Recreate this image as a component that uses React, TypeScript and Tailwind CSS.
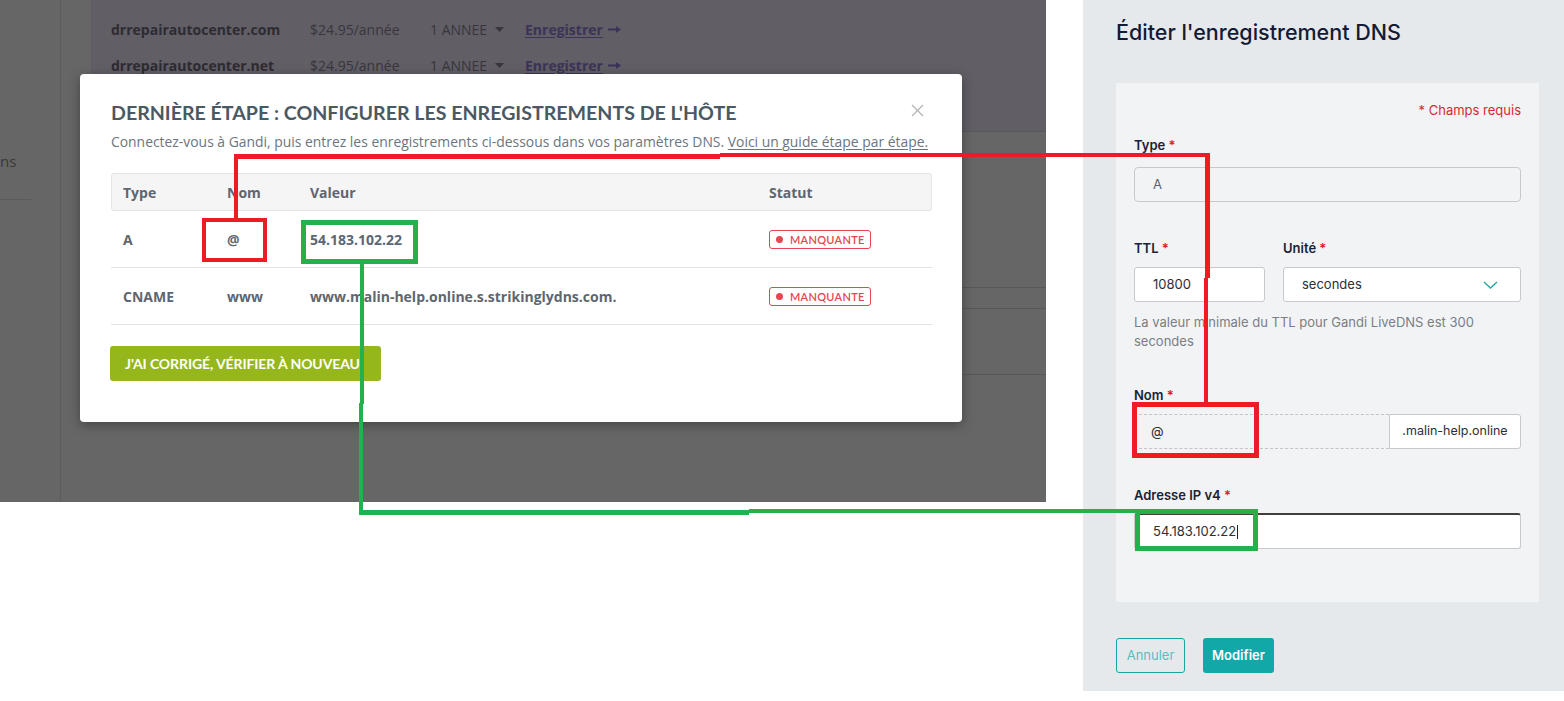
import React from 'react';

const RED = 'bg-[#ed1c24]';
const GREEN = 'bg-[#22b14c]';

const Badge: React.FC = () => (
  <span className="inline-flex items-center h-[19px] w-[102px] border border-[#e5464f] rounded-[3px] pl-[6px] gap-[7px] text-[#e5464f] text-[11px] leading-none font-['Lato'] font-semibold tracking-[0.3px] whitespace-nowrap">
    <span className="w-[7px] h-[7px] shrink-0 rounded-full bg-[#e5464f]" />
    MANQUANTE
  </span>
);

const Arrow: React.FC = () => (
  <svg width="13" height="7" viewBox="0 0 13 7" className="ml-[5px]">
    <rect x="0" y="2.5" width="9" height="2" fill="#3c3358" />
    <path d="M8 0 L13 3.5 L8 7 Z" fill="#3c3358" />
  </svg>
);

const DomainRow: React.FC<{ name: string }> = ({ name }) => (
  <div className="flex items-center h-[36px]">
    <span className="w-[199px] font-bold text-[#2d2b31]">{name}</span>
    <span className="w-[120px] text-[#38363c]">$24.95/année</span>
    <span className="flex items-center w-[95px] text-[#38363c]">
      1 ANNEE
      <svg width="9" height="5" viewBox="0 0 9 5" className="ml-[8px]"><path d="M0 0 L9 0 L4.5 5 Z" fill="#38363c" /></svg>
    </span>
    <span className="flex items-center font-bold text-[#3c3358]">
      <span className="underline underline-offset-2">Enregistrer</span>
      <Arrow />
    </span>
  </div>
);

const Label: React.FC<{ text: string; className?: string }> = ({ text, className }) => (
  <div className={`text-[13px] leading-[18px] font-semibold text-[#1b2233] ${className ?? ''}`}>
    {text} <span className="text-[#e0112b]">*</span>
  </div>
);

const App: React.FC = () => {
  return (
    <div className="relative w-[1564px] h-[701px] bg-white overflow-hidden flex items-start">
      {/* Strikingly screenshot with modal */}
      <div className="relative w-[1046px] h-[502px] shrink-0 bg-[#666666] flex font-['Open_Sans'] text-[14px]">
        <div className="w-[61px] shrink-0 border-r border-[#5b5b5b] flex flex-col">
          <div className="h-[151px]" />
          <div className="h-[48px] text-[15px] leading-[20px] text-[#3a3a3a]">ns</div>
          <div className="w-[31px] border-t border-[#5b5b5b]" />
        </div>
        <div className="w-[30px] shrink-0" />
        <div className="flex-1 flex flex-col">
          <div className="h-[131px] bg-[#615e66] pl-[20px] pt-[11px]">
            <DomainRow name="drrepairautocenter.com" />
            <DomainRow name="drrepairautocenter.net" />
          </div>
          <div className="h-[22px] border-t border-[#585858]" />
          <div className="h-[134px] border-t border-[#585858]" />
          <div className="h-[21px] border-t border-[#585858]" />
          <div className="h-[66px] border-t border-[#585858]" />
          <div className="border-t border-[#585858]" />
        </div>

        {/* modal */}
        <div className="absolute left-[80px] top-[74px] w-[882px] h-[348px] bg-white rounded-[4px] shadow-[0_3px_12px_rgba(0,0,0,0.35)] pl-[31px] pr-[30px] pt-[27px]">
          <svg width="13" height="13" viewBox="0 0 13 13" className="absolute left-[831px] top-[30px]">
            <path d="M1 1 L12 12 M12 1 L1 12" stroke="#b4b4b4" strokeWidth="1.3" />
          </svg>
          <h2 className="font-['Lato'] font-bold text-[19.6px] leading-[24px] text-[#4b5963] whitespace-nowrap">
            DERNIÈRE ÉTAPE : CONFIGURER LES ENREGISTREMENTS DE L'HÔTE
          </h2>
          <p className="mt-[7px] text-[13.9px] leading-[20px] text-[#6b7580] whitespace-nowrap">
            Connectez-vous à Gandi, puis entrez les enregistrements ci-dessous dans vos paramètres DNS.{' '}
            <span className="underline underline-offset-2">Voici un guide étape par étape.</span>
          </p>
          <div className="mt-[21px] w-[821px]">
            <div className="grid grid-cols-[104px_83px_459px_1fr] h-[38px] items-center bg-[#f5f5f5] border border-[#e4e4e4] rounded-[3px] font-bold text-[#5e6670]">
              <span className="pl-[11px]">Type</span>
              <span className="pl-[11px]">Nom</span>
              <span className="pl-[11px]">Valeur</span>
              <span className="pl-[11px]">Statut</span>
            </div>
            <div className="grid grid-cols-[104px_83px_459px_1fr] h-[57px] items-center border-b border-[#e4e4e4] font-bold text-[#5e6670]">
              <span className="pl-[12px]">A</span>
              <span className="pl-[12px]">@</span>
              <span className="pl-[12px]">54.183.102.22</span>
              <span className="pl-[12px] flex"><Badge /></span>
            </div>
            <div className="grid grid-cols-[104px_83px_459px_1fr] h-[57px] items-center border-b border-[#e4e4e4] font-bold text-[#5e6670]">
              <span className="pl-[12px]">CNAME</span>
              <span className="pl-[12px]">www</span>
              <span className="pl-[12px]">www.malin-help.online.s.strikinglydns.com.</span>
              <span className="pl-[12px] flex"><Badge /></span>
            </div>
          </div>
          <button className="mt-[21px] -ml-[1px] w-[271px] h-[35px] bg-[#96b71c] rounded-[3px] text-white font-['Lato'] font-bold text-[14px] tracking-[-0.1px] text-left pl-[15px]">
            J'AI CORRIGÉ, VÉRIFIER À NOUVEAU
          </button>
        </div>
      </div>

      {/* Gandi panel */}
      <div className="ml-[37px] w-[481px] h-[691px] shrink-0 bg-[#e6e9ec] pl-[33px] pt-[18px] font-['Inter']">
        <h2 className="text-[21.5px] leading-[28px] font-medium text-[#131a35]">Éditer l'enregistrement DNS</h2>
        <div className="mt-[37px] w-[423px] h-[519px] bg-[#f2f3f5] pl-[18px] pr-[18px] pt-[18px]">
          <div className="text-right text-[13px] leading-[18px] text-[#d42a36]">* Champs requis</div>
          <Label text="Type" className="mt-[17px]" />
          <div className="mt-[13px] h-[35px] border border-[#c6c9ce] rounded-[4px] flex items-center pl-[18px] text-[13px] text-[#5b6172]">A</div>

          <div className="mt-[37px] flex gap-[18px]">
            <div className="w-[131px]">
              <Label text="TTL" />
              <div className="mt-[10px] h-[35px] bg-white border border-[#c6c9ce] rounded-[3px] flex items-center pl-[18px] text-[13px] text-[#2b2f38]">10800</div>
            </div>
            <div className="flex-1">
              <Label text="Unité" />
              <div className="mt-[10px] h-[35px] bg-white border border-[#c6c9ce] rounded-[3px] flex items-center justify-between pl-[18px] pr-[22px] text-[13px] text-[#2b2f38]">
                secondes
                <svg width="15" height="8" viewBox="0 0 15 8"><path d="M1 1 L7.5 7 L14 1" fill="none" stroke="#1aa6a6" strokeWidth="1.3" /></svg>
              </div>
            </div>
          </div>
          <p className="mt-[11px] text-[13px] leading-[19px] text-[#7a7e86]">
            La valeur minimale du TTL pour Gandi LiveDNS est 300
            <br />
            secondes
          </p>

          <Label text="Nom" className="mt-[35px]" />
          <div className="mt-[10px] h-[35px] flex">
            <div className="flex-1 border-y border-dashed border-[#c4c4c4] flex items-center pl-[17px] text-[13px] text-[#2b2f38]">@</div>
            <div className="w-[132px] bg-white border border-[#c6c9ce] rounded-r-[3px] flex items-center justify-center text-[12.5px] text-[#2b2f38]">.malin-help.online</div>
          </div>

          <Label text="Adresse IP v4" className="mt-[37px]" />
          <div className="mt-[9px] h-[36px] bg-white border border-[#c6c9ce] border-t-2 border-t-[#3f3f3f] rounded-[3px] flex items-center pl-[18px] text-[13px] text-[#2b2f38]">
            54.183.102.22
            <span className="ml-[1px] w-px h-[14px] bg-[#222]" />
          </div>
        </div>
        <div className="mt-[36px] flex gap-[18px]">
          <button className="w-[69px] h-[35px] border border-[#1aa3a3] rounded-[3px] text-[13px] text-[#5cbcbc]">Annuler</button>
          <button className="w-[71px] h-[35px] bg-[#12a8a8] rounded-[3px] text-[13px] font-semibold text-white">Modifier</button>
        </div>
      </div>

      {/* annotations */}
      <div className="absolute left-[202px] top-[218px] w-[65px] h-[44px] border-[4px] border-[#ed1c24]" />
      <div className={`absolute left-[234px] top-[154px] w-[4px] h-[64px] ${RED}`} />
      <div className={`absolute left-[234px] top-[154px] w-[486px] h-[5px] ${RED}`} />
      <div className={`absolute left-[720px] top-[153px] w-[490px] h-[4px] ${RED}`} />
      <div className={`absolute left-[1205px] top-[153px] w-[5px] h-[125px] ${RED}`} />
      <div className={`absolute left-[1204px] top-[278px] w-[4px] h-[125px] ${RED}`} />
      <div className="absolute left-[1132px] top-[402px] w-[127px] h-[56px] border-[5px] border-[#ed1c24]" />

      <div className="absolute left-[301px] top-[220px] w-[117px] h-[44px] border-[5px] border-[#22b14c]" />
      <div className={`absolute left-[360px] top-[264px] w-[4px] h-[140px] ${GREEN}`} />
      <div className={`absolute left-[359px] top-[403px] w-[4px] h-[112px] ${GREEN}`} />
      <div className={`absolute left-[359px] top-[510px] w-[390px] h-[5px] ${GREEN}`} />
      <div className={`absolute left-[749px] top-[509px] w-[386px] h-[4px] ${GREEN}`} />
      <div className="absolute left-[1135px] top-[509px] w-[123px] h-[42px] border-[5px] border-[#22b14c]" />
    </div>
  );
};

export default App;
